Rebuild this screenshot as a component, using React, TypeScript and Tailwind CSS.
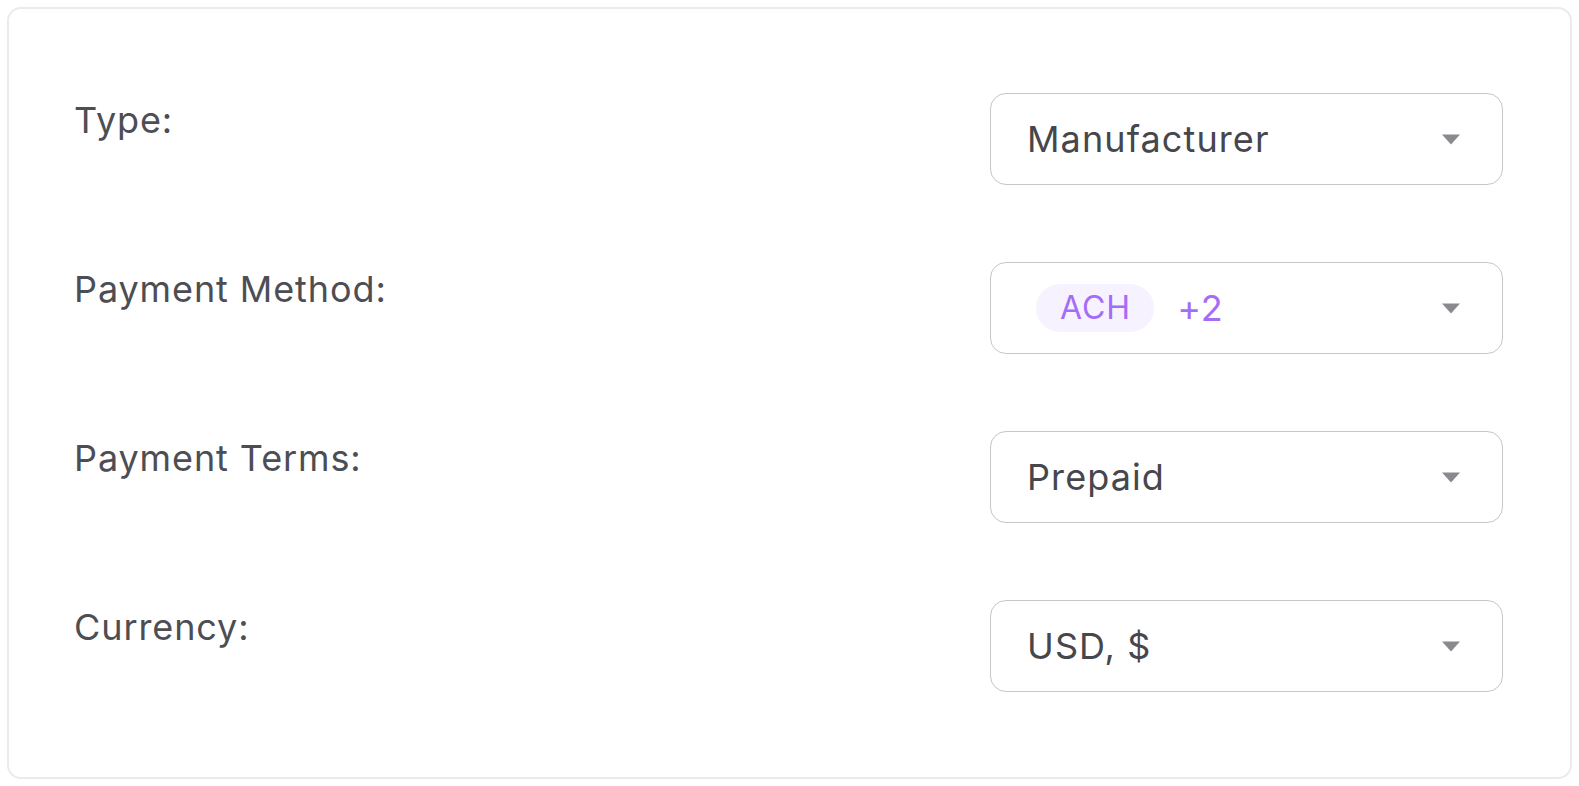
import { ReactNode } from 'react';

// ─── Caret ────────────────────────────────────────────────────────────────────
function Caret() {
    return (
        <svg width="20" height="11" viewBox="0 0 20 11" className="shrink-0">
            <path d="M1 0.5 H19 L10 10.5 Z" fill="#8a8a8e" />
        </svg>
    );
}

// ─── Select box ───────────────────────────────────────────────────────────────
function SelectBox({ children, pl = 'pl-[36px]' }: { children: ReactNode; pl?: string }) {
    return (
        <div className={`w-[513px] h-[92px] shrink-0 border border-[#c6c6c9] rounded-[16px] bg-white flex items-center justify-between ${pl} pr-[41px]`}>
            <div className="flex items-center gap-[23px] min-w-0">{children}</div>
            <Caret />
        </div>
    );
}

function Row({ label, children }: { label: string; children: ReactNode }) {
    return (
        <div className="flex items-start justify-between">
            <span className="text-[36px] leading-[54px] text-[#4d4d54] tracking-[0.9px]">{label}</span>
            {children}
        </div>
    );
}

export default function App() {
    return (
        <div className="w-[1579px] h-[786px] bg-white p-[7px]" style={{ fontFamily: 'Inter, "Noto Sans", sans-serif' }}>
            <div className="h-full border-2 border-[#ebebed] rounded-[14px] pl-[65px] pr-[67px] pt-[84px] flex flex-col gap-[77px]">
                <Row label="Type:">
                    <SelectBox>
                        <span className="text-[36px] leading-[54px] text-[#46464c] tracking-[1.1px]">Manufacturer</span>
                    </SelectBox>
                </Row>
                <Row label="Payment Method:">
                    <SelectBox pl="pl-[45px]">
                        <span className="h-[48px] pl-[24px] pr-[23px] rounded-full bg-[#f6f2ff] text-[#a46cf7] text-[32px] leading-[48px] tracking-[1px]">ACH</span>
                        <span className="text-[36px] leading-[54px] text-[#a46cf7] tracking-[1px]">+2</span>
                    </SelectBox>
                </Row>
                <Row label="Payment Terms:">
                    <SelectBox>
                        <span className="text-[36px] leading-[54px] text-[#46464c] tracking-[1.1px]">Prepaid</span>
                    </SelectBox>
                </Row>
                <Row label="Currency:">
                    <SelectBox>
                        <span className="text-[36px] leading-[54px] text-[#46464c] tracking-[1.1px]">USD, $</span>
                    </SelectBox>
                </Row>
            </div>
        </div>
    );
}
